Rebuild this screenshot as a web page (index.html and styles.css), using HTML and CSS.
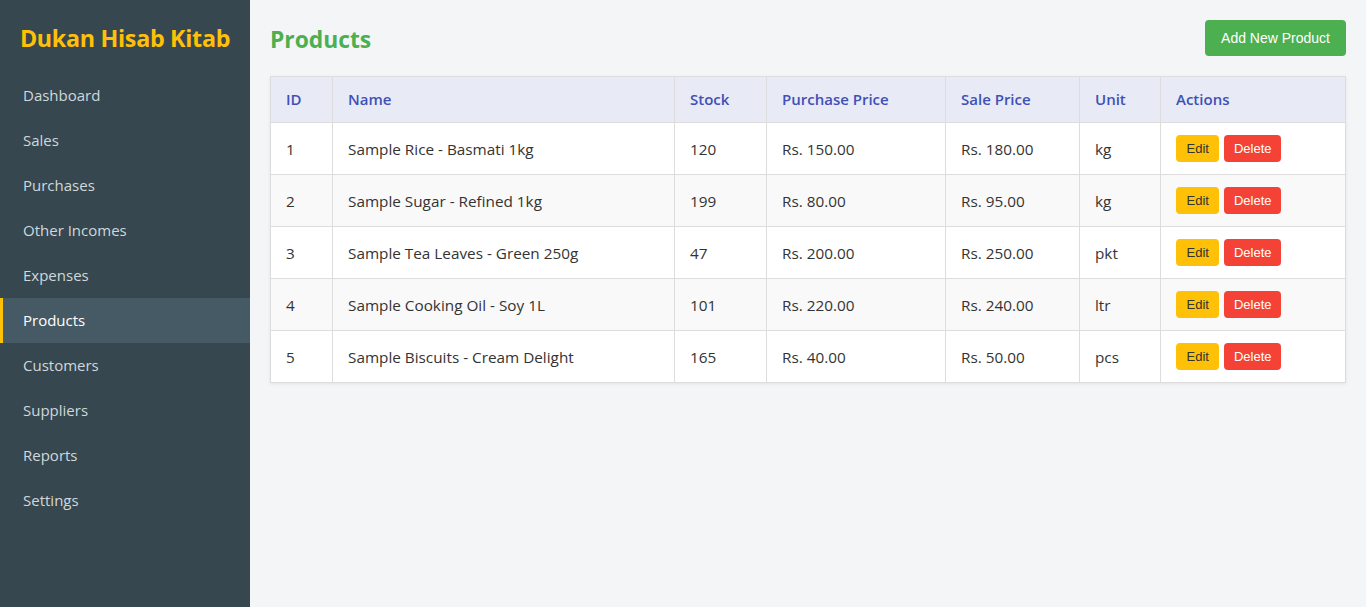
FILE: index.html
```html
<!DOCTYPE html>
<html>
<head>
<meta charset="utf-8">
<title>Products - Dukan Hisab Kitab</title>
<link rel="stylesheet" href="styles.css">
</head>
<body>
<div class="app">
  <aside class="sidebar">
    <h1 class="brand">Dukan Hisab Kitab</h1>
    <nav class="nav">
      <a class="nav-item" href="#">Dashboard</a>
      <a class="nav-item" href="#">Sales</a>
      <a class="nav-item" href="#">Purchases</a>
      <a class="nav-item" href="#">Other Incomes</a>
      <a class="nav-item" href="#">Expenses</a>
      <a class="nav-item active" href="#">Products</a>
      <a class="nav-item" href="#">Customers</a>
      <a class="nav-item" href="#">Suppliers</a>
      <a class="nav-item" href="#">Reports</a>
      <a class="nav-item" href="#">Settings</a>
    </nav>
  </aside>
  <main class="main">
    <div class="page-head">
      <h2 class="page-title">Products</h2>
      <button class="btn btn-add">Add New Product</button>
    </div>
    <table class="data-table">
      <colgroup>
        <col class="c-id"><col class="c-name"><col class="c-stock"><col class="c-pp"><col class="c-sp"><col class="c-unit"><col class="c-act">
      </colgroup>
      <thead>
        <tr><th>ID</th><th>Name</th><th>Stock</th><th>Purchase Price</th><th>Sale Price</th><th>Unit</th><th>Actions</th></tr>
      </thead>
      <tbody>
        <tr><td>1</td><td>Sample Rice - Basmati 1kg</td><td>120</td><td>Rs. 150.00</td><td>Rs. 180.00</td><td>kg</td><td><button class="btn btn-edit">Edit</button><button class="btn btn-del">Delete</button></td></tr>
        <tr><td>2</td><td>Sample Sugar - Refined 1kg</td><td>199</td><td>Rs. 80.00</td><td>Rs. 95.00</td><td>kg</td><td><button class="btn btn-edit">Edit</button><button class="btn btn-del">Delete</button></td></tr>
        <tr><td>3</td><td>Sample Tea Leaves - Green 250g</td><td>47</td><td>Rs. 200.00</td><td>Rs. 250.00</td><td>pkt</td><td><button class="btn btn-edit">Edit</button><button class="btn btn-del">Delete</button></td></tr>
        <tr><td>4</td><td>Sample Cooking Oil - Soy 1L</td><td>101</td><td>Rs. 220.00</td><td>Rs. 240.00</td><td>ltr</td><td><button class="btn btn-edit">Edit</button><button class="btn btn-del">Delete</button></td></tr>
        <tr><td>5</td><td>Sample Biscuits - Cream Delight</td><td>165</td><td>Rs. 40.00</td><td>Rs. 50.00</td><td>pcs</td><td><button class="btn btn-edit">Edit</button><button class="btn btn-del">Delete</button></td></tr>
      </tbody>
    </table>
  </main>
</div>
</body>
</html>
```
FILE: styles.css
```css
* { box-sizing: border-box; }
html, body { margin: 0; padding: 0; height: 100%; }
body {
  font-family: "Open Sans", "Noto Sans", sans-serif;
  font-size: 15px;
  color: #333;
  background: #f4f5f7;
}
.app { display: flex; min-height: 100vh; }
.sidebar {
  width: 250px;
  flex: 0 0 250px;
  background: #37474f;
  padding-top: 22px;
}
.brand {
  margin: 0 0 19px;
  text-align: center;
  color: #ffc107;
  font-size: 23.3px;
  font-weight: 700;
  line-height: 32px;
  letter-spacing: -0.3px;
}
.nav { display: flex; flex-direction: column; }
.nav-item {
  display: block;
  padding: 12px 20px;
  border-left: 3px solid transparent;
  color: #cfd8dc;
  text-decoration: none;
  line-height: 21px;
  font-size: 15px;
}
.nav-item.active {
  background: #455a64;
  border-left-color: #ffc107;
  color: #fff;
}
.main { flex: 1; padding: 20px; }
.page-head {
  display: flex;
  justify-content: space-between;
  align-items: center;
  margin-bottom: 20px;
}
.page-title {
  margin: 0;
  padding-top: 4px;
  color: #4caf50;
  font-size: 22.8px;
  font-weight: 700;
  line-height: 32px;
}
.btn {
  font-family: "Liberation Sans", Arial, sans-serif;
  border: 0;
  border-radius: 4px;
  cursor: pointer;
  color: #fff;
}
.btn-add {
  background: #4caf50;
  font-size: 14px;
  line-height: 16px;
  padding: 10px 16px;
}
.btn-edit, .btn-del {
  font-size: 13px;
  line-height: 15px;
  padding: 6px 10px;
  margin-right: 5px;
  vertical-align: middle;
}
.btn-edit { background: #ffc107; color: #333; padding-left: 10.5px; padding-right: 10.5px; }
.btn-del { background: #f44336; padding-left: 9.5px; padding-right: 9.5px; }
.data-table {
  width: 100%;
  border-collapse: collapse;
  background: #fff;
  table-layout: fixed;
  box-shadow: 0 1px 3px rgba(0,0,0,0.08);
}
.c-id { width: 62px; }
.c-name { width: 342px; }
.c-stock { width: 92px; }
.c-pp { width: 179px; }
.c-sp { width: 134px; }
.c-unit { width: 81px; }
.data-table th, .data-table td {
  border: 1px solid #ddd;
  padding: 12px 15px;
  text-align: left;
  line-height: 21px;
  white-space: nowrap;
}
.data-table th {
  background: #e8eaf6;
  color: #3f51b5;
  font-weight: 600;
}
.data-table td { font-size: 15.3px; padding-top: 13px; padding-bottom: 11px; }
.data-table td:last-child { padding-top: 12px; padding-bottom: 12px; }
.data-table tbody tr { height: 52px; }
.data-table tbody tr:nth-child(even) { background: #f9f9f9; }
```
